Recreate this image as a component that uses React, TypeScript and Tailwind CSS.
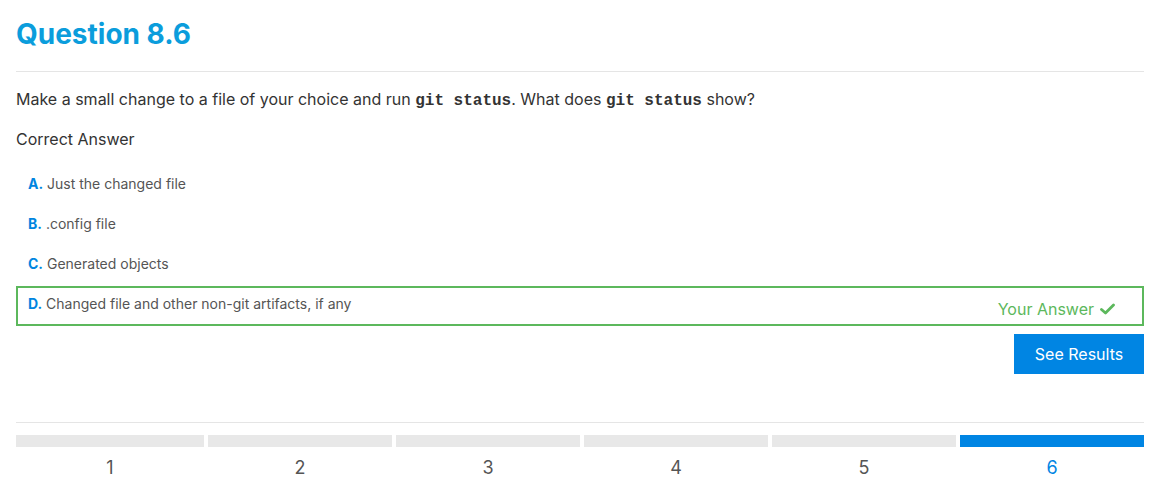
import React from "react";

const options = [
  { l: "A.", t: "Just the changed file" },
  { l: "B.", t: ".config file" },
  { l: "C.", t: "Generated objects" },
  { l: "D.", t: "Changed file and other non-git artifacts, if any", mine: true },
];

export default function App() {
  return (
    <div className="bg-white pl-4 pr-[13px] pt-[14px] text-[#333]" style={{ fontFamily: "Inter, 'Noto Sans', sans-serif" }}>
      <h1 className="text-[28px] font-bold leading-[40px] text-[#0b9ddc]">Question 8.6</h1>
      <div className="mt-[17px] border-t border-[#e5e5e5]" />
      <p className="mt-[15px] text-[16px] leading-[24px] text-[#333]">
        Make a small change to a file of your choice and run{" "}
        <code className="font-bold" style={{ fontFamily: "'Liberation Mono', monospace" }}>git status</code>. What does{" "}
        <code className="font-bold" style={{ fontFamily: "'Liberation Mono', monospace" }}>git status</code> show?
      </p>
      <p className="mt-[14px] text-[16px] leading-[24px]">Correct Answer</p>
      <div className="mt-[15px] flex flex-col">
        {options.map((o) => (
          <div
            key={o.l}
            className={`flex h-[40px] items-start justify-between border-2 px-[10px] pt-[6px] ${o.mine ? "border-[#5cb85c]" : "border-transparent"}`}
          >
            <div className="text-[14px] leading-[20px] text-[#555]">
              <span className="font-bold text-[#0085e0]">{o.l}</span> {o.t}
            </div>
            {o.mine && (
              <div className="mr-[17px] mt-[3px] flex items-center gap-[6px] text-[16px] leading-[24px] text-[#5cb85c]">
                Your Answer
                <svg width="15" height="12" viewBox="0 0 15 12">
                  <path d="M1.5 6.5 L5.5 10 L13.5 2" fill="none" stroke="#5cb85c" strokeWidth="2.8" strokeLinecap="round" strokeLinejoin="round" />
                </svg>
              </div>
            )}
          </div>
        ))}
      </div>
      <div className="mt-[8px] flex justify-end">
        <button className="h-[40px] w-[130px] bg-[#0085e3] text-[16px] text-white">See Results</button>
      </div>
      <div className="mt-[48px] border-t border-[#e5e5e5]" />
      <div className="mt-[12px] grid grid-cols-[188px_repeat(5,184px)] gap-x-[4px]">
        {[1, 2, 3, 4, 5, 6].map((n) => (
          <div key={n} className="flex flex-col items-center">
            <div className={`h-[12px] w-full ${n === 6 ? "bg-[#0085e3]" : "bg-[#e8e8e8]"}`} />
            <div className={`mt-[9px] text-[18px] leading-[24px] ${n === 6 ? "text-[#0085e3]" : "text-[#555]"}`}>{n}</div>
          </div>
        ))}
      </div>
    </div>
  );
}
